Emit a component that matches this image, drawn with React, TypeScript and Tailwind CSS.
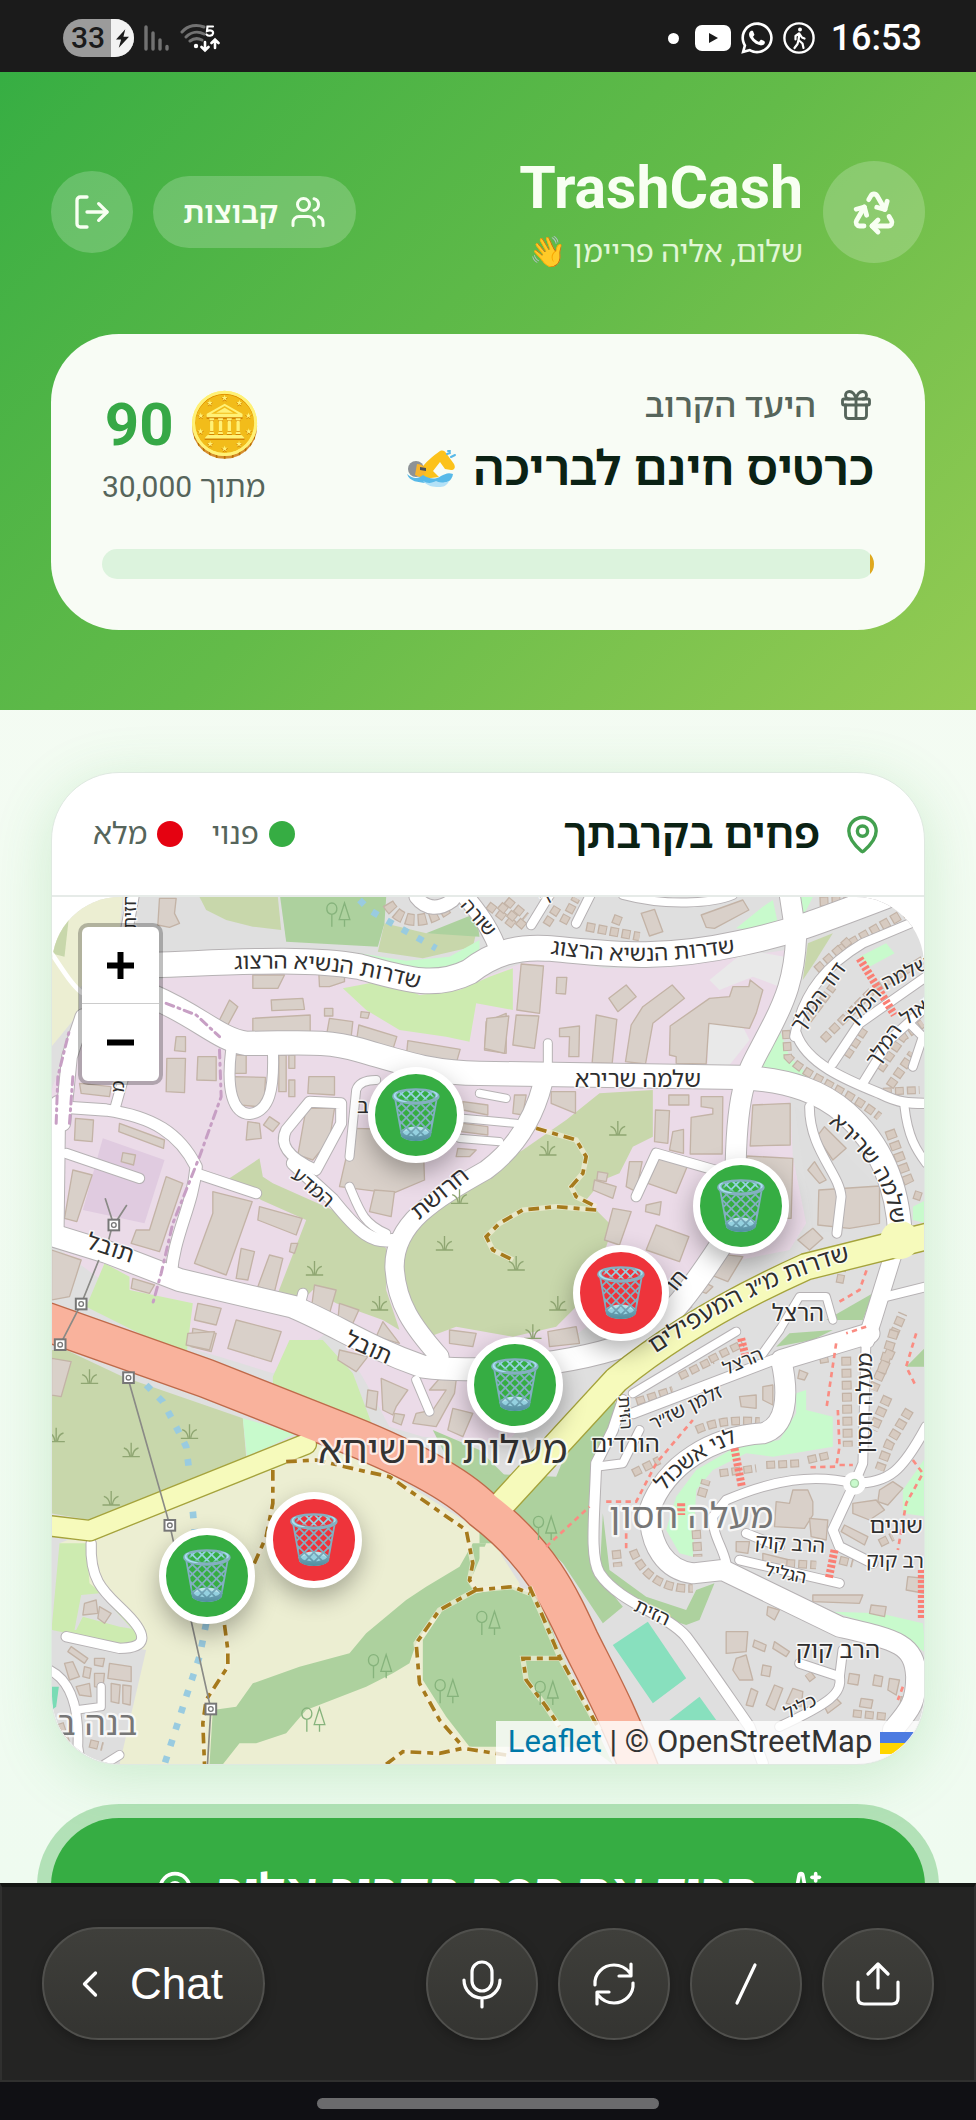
import type { ReactNode } from "react";
import { ChevronLeft, Gift, LogOut, MapPin, Mic, Recycle, Sparkles, Users } from "lucide-react";
import { FaWhatsapp } from "react-icons/fa";

type Road = { d: string; w: number };
type Label = { t: string; d: string; s: number; c?: string };

const OFFSETS = { nw: "translate(0 0)", ne: "translate(1320 0)", sw: "translate(0 1320)", se: "translate(1320 1320)" };
type Quarter = keyof typeof OFFSETS;
const QUARTERS: Quarter[] = ["nw", "ne", "sw", "se"];

const HEATH = "#c8d7ab";
const WOOD = "#add19e";
const GRASS = "#cdebb0";
const PARK = "#c8facc";
const FARM = "#eceed2";

const AREAS: Record<Quarter, [string, string][]> = {
  nw: [
    [FARM, "36,21 250,21 240,120 118,300 118,370 36,470"],
    [HEATH, "36,60 95,21 75,200 36,190"],
    [HEATH, "480,21 715,21 725,120 640,110 560,90 500,60"],
    [WOOD, "722,21 1040,21 1035,100 1015,170 740,155"],
    [HEATH, "1035,100 1160,130 1310,130 1300,170 1150,205 1015,185"],
    [WOOD, "1160,130 1310,70 1320,140"],
    [PARK, "840,180 960,190 1100,212 1230,200 1320,150 1320,210 1180,245 1080,235 960,205"],
    [
      "#ebdbe8",
      "370,265 600,250 930,250 1110,310 1230,300 1500,200 1700,235 1900,230 2240,180 2200,400 2140,520 2250,600 2260,800 2300,1000 2250,1080 2000,1130 1800,1200 1600,1340 1560,1480 1400,1660 1290,1650 1150,1640 1050,1610 980,1480 900,1340 860,1330 700,1450 540,1400 470,1380 36,1060 36,600 110,400",
    ],
    [GRASS, "910,295 1040,270 1140,315 1260,300 1350,260 1420,235 1420,360 1310,340 1290,455 1220,440 1080,420 980,360"],
    ["#e0cbe0", "190,745 375,810 315,1000 130,960"],
    [HEATH, "570,865 660,805 670,860 700,880 880,960 1040,1075 1040,1200 1080,1320 1030,1290 890,1240 820,1200 790,1230 715,1210 800,990 665,930"],
    [HEATH, "1100,1000 1200,900 1320,850 1450,780 1580,690 1680,610 1840,600 1840,740 1780,770 1740,850 1690,870 1640,930 1720,1010 1690,1100 1660,1200 1550,1310 1420,1340 1250,1310 1170,1340 1110,1250 1090,1120"],
    [GRASS, "195,1120 270,1160 270,1200 460,1240 440,1400 320,1340 140,1250"],
  ],
  ne: [
    [PARK, "770,115 850,50 880,30 895,100 830,120"],
    [PARK, "940,21 1000,21 970,80"],
    [PARK, "835,540 900,420 930,500 1020,590 960,570"],
    [PARK, "1140,200 1220,160 1245,190 1170,230"],
    [HEATH, "970,270 985,160 1060,130 1010,210"],
    ["#e9e9e9", "690,270 800,180 915,200 900,290 820,260 720,300"],
    ["#e9e9e9", "685,400 790,410 810,450 750,525 685,525"],
    ["#dedede", "945,650 1010,700 1200,900 1200,1010 1000,1030"],
    [PARK, "1300,950 1340,930 1340,1000 1300,990"],
    [WOOD, "1040,1290 1180,1210 1150,1290"],
    [WOOD, "890,1370 930,1330 1060,1320 1000,1350"],
  ],
  sw: [
    [GRASS, "700,140 750,30 850,30 940,130 1000,290 1040,310 900,260 700,180"],
    [HEATH, "36,60 80,60 250,140 610,265 620,380 370,480 150,570 36,550"],
    [PARK, "610,265 770,310 700,345 622,378"],
    [FARM, "60,640 830,330 1050,430 1350,620 1440,760 1400,1303 230,1303"],
    [GRASS, "60,640 140,640 150,760 320,900 300,970 90,930 36,900"],
    ["#dedede", "36,900 320,960 240,1303 36,1303"],
    ["#dedede", "125,795 180,790 280,900 105,900"],
    [GRASS, "110,900 130,860 240,890 300,900 270,950"],
    [WOOD, "510,1303 520,1140 590,1130 640,1060 780,1010 930,970 980,910 1100,810 1160,770 1260,710 1300,640 1340,640 1290,760 1310,790 1180,860 1130,940 1110,1000 1060,1030 980,1070 800,1140 740,1210 650,1240 600,1240 550,1303"],
    [WOOD, "1150,930 1210,840 1310,790 1420,770 1500,800 1560,960 1720,1303 1650,1250 1290,1250 1220,1160 1150,1050"],
    [WOOD, "1180,300 1320,360 1400,440 1380,520 1240,420"],
    ["#79dcb5", "36,1070 58,1070 50,1130 36,1140"],
  ],
  se: [
    [WOOD, "60,640 0,640 0,430 230,440 330,200 390,200 420,230 340,400 340,720 430,830 370,880 250,700 100,550"],
    [FARM, "0,650 70,650 40,760 0,770"],
    [WOOD, "370,550 390,720 500,800 620,840 650,780 705,760 660,870 620,885 480,840 360,740"],
    [PARK, "770,350 900,330 950,250 950,190 980,180 980,240 1060,260 1060,350 880,380 800,370 700,420 650,480 640,680 600,670 560,600 590,500 650,420"],
    [PARK, "1060,845 1200,850 1330,880 1340,970 1260,910"],
    [PARK, "1270,480 1340,380 1340,560 1270,550"],
    [WOOD, "1280,110 1340,50 1340,110"],
    ["#88e0be", "400,945 505,875 620,1045 520,1120"],
    ["#88e0be", "570,1170 660,1100 710,1170"],
  ],
};

const WHITE_ROADS: Record<Quarter, Road[]> = {
  nw: [
    { d: "M340,225 C560,218 800,200 960,230 C1080,262 1180,300 1290,245 C1360,190 1430,170 1520,175 C1700,190 1850,215 2100,160 C2250,130 2350,90 2560,10", w: 74 },
    { d: "M1380,190 C1360,130 1330,80 1270,10", w: 50 },
    { d: "M340,320 C480,380 540,450 620,460 C780,460 860,450 960,480 C1100,520 1180,550 1320,550 L2100,562 C2260,570 2350,610 2420,670 C2520,760 2575,880 2582,1040", w: 70 },
    { d: "M2250,10 L2270,140 C2265,260 2240,330 2180,440 C2130,540 2090,570 2088,860", w: 60 },
    { d: "M1510,580 C1480,700 1420,780 1340,840 C1180,930 1065,1000 1065,1130 C1070,1240 1120,1310 1200,1400", w: 55 },
    { d: "M20,1030 L200,1085 L420,1170 L760,1250 C900,1310 980,1370 1150,1430 C1300,1450 1600,1430 1800,1350 C1880,1300 1960,1200 2080,1010", w: 66 },
    { d: "M810,635 L905,640 L905,700 L830,840 C740,800 720,760 740,720 Z", w: 30 },
    { d: "M760,820 L880,930 C960,1030 1000,1060 1060,1050", w: 36 },
    { d: "M930,890 C960,960 970,1000 1040,1030", w: 24 },
    { d: "M930,800 L950,600 Q960,570 1010,570", w: 24 },
    { d: "M575,480 C560,600 580,670 630,672 C690,665 705,600 700,480", w: 30 },
    { d: "M50,650 L200,660 C340,680 420,730 470,830 C460,950 400,1040 395,1160", w: 34 },
    { d: "M470,850 L650,910", w: 30 },
    { d: "M80,790 L300,865", w: 28 },
    { d: "M70,700 L90,500 L130,380", w: 44 },
    { d: "M225,660 L270,500", w: 28 },
    { d: "M55,640 L50,1040", w: 44 },
    { d: "M280,21 L260,130", w: 34 },
    { d: "M1130,21 C1160,60 1200,60 1240,30", w: 40 },
    { d: "M1320,610 L1400,625 M1270,685 L1430,700 M1260,745 L1380,755", w: 22 },
    { d: "M790,1210 L780,1250", w: 28 },
  ],
  ne: [
    { d: "M470,920 L530,790 L740,850", w: 28 },
    { d: "M990,650 C990,780 1080,850 1085,920 L1072,1030", w: 26 },
    { d: "M950,430 C980,520 1100,570 1200,610 C1260,640 1290,640 1340,640", w: 28 },
    { d: "M945,440 C970,300 1050,220 1150,160 L1340,80", w: 26 },
    { d: "M1060,520 L1140,400 L1340,260 M1150,580 L1230,450 L1340,350", w: 26 },
    { d: "M1275,650 C1285,740 1310,780 1340,820", w: 24 },
    { d: "M1290,400 L1330,440 L1300,530", w: 24 },
    { d: "M155,105 L210,15 M290,100 L335,10", w: 26 },
    { d: "M430,15 C560,50 700,40 760,15", w: 24 },
    { d: "M1245,1080 L1180,1290 L1160,1350", w: 50 },
    { d: "M205,545 L205,460", w: 24 },
    { d: "M900,1320 L960,1220 L1040,1220 L1060,1290", w: 22 },
    { d: "M1220,1220 L1340,1190", w: 26 },
  ],
  sw: [
    { d: "M155,640 C150,760 200,790 260,850 C330,920 320,955 240,955 L80,920", w: 28 },
    { d: "M30,1020 C90,1050 120,1120 115,1250 L125,1310", w: 26 },
    { d: "M185,1070 L185,1130 L110,1140", w: 22 },
    { d: "M195,1303 L240,1275", w: 24 },
    { d: "M1130,150 L1170,245", w: 24 },
  ],
  se: [
    { d: "M1170,10 L905,90 C930,200 920,290 850,310 C700,320 560,400 510,540 C510,650 560,720 640,730 L730,720 L1080,890 C1250,930 1305,940 1310,1040 C1310,1120 1290,1140 1240,1200", w: 60 },
    { d: "M1160,20 L1150,400 L1125,460 C1000,430 880,450 740,510 L700,560 C700,620 730,650 740,700", w: 26 },
    { d: "M1125,460 C1230,460 1270,420 1340,290 M1125,460 L1060,600 L1080,650 L1180,700", w: 28 },
    { d: "M780,690 L1080,760 M800,610 L900,650", w: 26 },
    { d: "M460,250 L880,90", w: 30 },
    { d: "M460,190 L770,5 M850,70 L900,0", w: 24 },
    { d: "M430,210 L400,300 L350,400 C345,560 330,680 360,730 C420,820 560,850 620,920 C680,1000 740,1090 810,1190 L850,1300", w: 30 },
    { d: "M350,410 L430,400 L480,300", w: 24 },
    { d: "M960,1000 L1080,1040 C1090,1090 1050,1120 900,1190", w: 26 },
    { d: "M1080,1040 L1090,960", w: 26 },
  ],
};

const BUILDINGS: Record<Quarter, string[]> = {
  nw: [
    "360,25 410,25 405,70 420,100 390,112 355,105",
    "640,255 735,255 715,295 640,295",
    "838,250 915,250 915,275 870,290 840,290",
    "695,330 790,325 795,358 697,362",
    "640,385 812,375 812,425 640,430",
    "540,390 570,330 595,350 565,405",
    "870,385 940,395 935,440 862,430",
    "958,405 1072,440 1060,478 952,445",
    "1105,452 1262,478 1250,520 1100,505",
    "855,355 880,355 880,378 855,378",
    "965,365 990,368 985,385 963,382",
    "410,440 438,440 438,485 405,482",
    "382,505 438,505 435,608 380,605",
    "475,500 530,500 530,572 472,570",
    "585,495 620,495 620,550 585,550",
    "583,560 678,562 675,615 655,650 600,645 583,615",
    "718,495 740,495 740,605 718,605",
    "748,495 766,495 766,535 748,535",
    "748,570 766,570 766,620 748,620",
    "808,560 885,560 885,615 805,610",
    "800,655 885,655 870,750 820,810 775,795",
    "690,680 720,700 700,725 672,705",
    "625,695 660,700 665,745 620,750",
    "108,685 162,690 158,755 105,750",
    "240,700 375,750 372,775 238,725",
    "250,788 288,795 282,825 245,815",
    "100,840 158,855 112,995 75,985",
    "380,860 430,880 360,1085 275,1060 290,1020 330,1020",
    "520,905 638,935 560,1155 465,1120 520,970",
    "660,950 788,985 770,1035 655,990",
    "605,1075 645,1085 625,1170 590,1165",
    "690,1095 730,1105 705,1205 655,1190",
    "755,1060 775,1060 765,1090 750,1085",
    "120,580 215,590 210,620 125,610",
    "36,1080 125,1110 90,1220 36,1230",
    "280,1165 345,1185 330,1210 275,1195",
    "940,715 1150,720 1155,870 1060,910 900,890",
    "1005,900 1065,905 1055,980 990,965",
    "825,1185 890,1200 870,1270 815,1260",
    "900,1240 958,1260 940,1300 895,1290",
    "475,1240 545,1255 530,1305 465,1290",
    "460,1315 530,1330 515,1385 455,1370",
    "590,1290 725,1325 695,1415 565,1375",
    "1270,635 1345,645 1345,675 1270,660",
    "1270,700 1345,710 1345,735 1265,725",
    "1255,775 1310,780 1290,800 1250,800",
    "1010,1340 1030,1295 1080,1360",
    "1340,395 1400,370 1400,490 1335,480",
  ],
  ne: [
    "125,222 192,228 180,370 112,360",
    "232,262 262,262 258,312 230,310",
    "110,375 178,378 165,475 100,465",
    "22,385 88,378 75,490 15,475",
    "388,325 440,285 470,320 415,365",
    "578,285 615,325 520,400 498,522 438,515 455,405 490,350",
    "350,375 412,388 398,520 338,518",
    "240,415 300,408 298,500 268,500 270,440 240,440",
    "572,408 690,325 750,320 760,290 808,290 812,270 850,300 830,370 810,415 688,400 680,522 590,520 590,500 570,495",
    "665,75 790,30 808,60 705,115 680,112",
    "485,70 525,58 550,125 510,138",
    "215,605 288,605 288,670 215,640",
    "568,615 628,615 628,645 568,645",
    "665,620 730,620 728,792 632,792 635,682 700,672 700,655 665,650",
    "528,660 570,662 565,760 525,755",
    "580,725 612,718 612,790 570,780",
    "450,815 488,815 470,905 440,890",
    "540,800 625,825 590,910 505,880",
    "500,945 545,935 540,975 498,965",
    "530,1005 628,1040 600,1115 500,1080",
    "400,955 455,965 420,1065 375,1050",
    "345,870 410,890 400,925 340,900",
    "355,845 385,850 380,875 352,870",
    "105,615 140,615 130,675 100,670",
    "820,645 932,640 932,765 812,768",
    "800,798 940,805 935,985 900,985",
    "1035,710 1100,775 1060,810 1012,740",
    "1005,815 1040,870 1020,880 985,840",
    "1018,900 1200,888 1200,1000 1110,1015 1015,1005",
    "1000,1015 1030,1045 990,1080 955,1050",
    "700,1090 790,1100 745,1175 670,1145",
    "640,1160 700,1190 680,1210 630,1190",
    "205,1325 290,1310 300,1360 210,1370",
  ],
  sw: [
    "445,10 525,5 510,60 440,45",
    "36,85 95,95 65,200 36,195",
    "985,180 1015,185 1010,240 980,230",
    "1025,145 1105,180 1070,230 1060,255 1030,240",
    "1065,250 1095,255 1085,285 1060,275",
    "1205,140 1250,150 1245,190 1190,290 1120,280 1130,250 1180,240 1220,180 1170,180",
    "1240,235 1300,250 1270,320 1225,300",
    "900,60 985,80 950,125 895,90",
    "1230,0 1310,10 1300,50 1230,40",
    "135,820 170,810 175,850 130,855",
    "180,830 215,850 195,880 175,865",
    "210,1000 275,1010 275,1055 205,1045",
    "165,985 195,985 190,1010 165,1005",
    "135,1010 155,1015 150,1045 130,1040",
    "165,1030 195,1030 190,1075 165,1070",
    "215,1060 242,1065 238,1120 215,1115",
    "250,1065 275,1068 272,1125 250,1120",
    "75,1000 100,995 120,1040 90,1050",
    "110,1070 150,1060 155,1100 120,1095",
    "95,950 145,985 135,1000 85,965",
  ],
  se: [
    "780,200 830,195 830,235 785,230",
    "850,170 880,165 880,225 850,210",
    "890,515 930,520 940,480 985,480 1000,515 1000,555 975,595 885,590",
    "990,565 1045,570 1040,630 995,620",
    "770,635 810,635 805,670 770,665",
    "1120,520 1190,510 1215,540 1170,570 1120,550",
    "1200,480 1240,455 1270,475 1225,525 1195,515",
    "1095,585 1165,620 1155,645 1085,605",
    "740,905 805,905 800,965 740,970",
    "770,985 800,975 820,1050 780,1050 760,1020",
    "825,930 860,945 855,965 820,950",
    "885,935 930,965 920,980 880,955",
    "850,1005 875,1010 870,1040 845,1035",
    "815,1075 835,1085 820,1130 800,1125",
    "885,1065 910,1075 885,1140 860,1125",
    "940,1075 970,1085 965,1130 920,1120",
    "1110,1030 1140,1035 1135,1065 1105,1060",
    "1185,1035 1210,1040 1205,1070 1180,1065",
    "1230,1045 1260,1050 1250,1095 1225,1080",
    "1035,1130 1070,1105 1085,1120 1045,1150",
    "1145,1105 1180,1110 1175,1135 1140,1130",
    "1175,825 1220,830 1215,860 1170,850",
    "1000,795 1085,795 1150,795 1140,820 1000,815",
    "865,830 900,840 885,870 862,855",
    "1285,740 1335,745 1335,790 1280,780",
    "1265,1100 1290,1105 1285,1150 1260,1140",
    "960,120 985,130 975,150 955,145",
    "850,670 930,690 930,710 850,695",
  ],
};

/* Terraced houses: thick dashed strokes running along the streets. */
const TERRACES: Record<Quarter, Road[]> = {
  nw: [
    { d: "M1045,40 C1080,100 1150,110 1230,50", w: 36 },
    { d: "M1345,45 L1430,110 M1400,30 L1460,80", w: 26 },
  ],
  ne: [
    { d: "M60,45 L135,110 M250,100 L290,25 M200,105 L235,50", w: 26 },
    { d: "M320,110 L480,140 M400,85 L425,95", w: 28 },
    { d: "M1020,35 L1130,30 M1080,180 L1290,60", w: 30 },
    { d: "M1010,240 L1110,150 M985,390 L1060,290", w: 26 },
    { d: "M1030,450 L1180,300 L1330,210 M1100,500 L1160,410", w: 26 },
    { d: "M920,420 L925,500 C980,560 1100,600 1200,680", w: 26 },
    { d: "M1230,590 L1300,490 M1200,540 L1270,440 L1330,400", w: 28 },
    { d: "M1230,720 C1260,800 1280,860 1290,880", w: 32 },
    { d: "M1210,605 L1320,600", w: 24 },
    { d: "M630,1240 L560,1300 M1240,1340 L1270,1270", w: 28 },
    { d: "M1080,1180 L1090,1130 M1310,930 L1320,900", w: 24 },
  ],
  sw: [{ d: "M60,1180 L80,1240 M150,1240 L190,1250", w: 26 }],
  se: [
    { d: "M690,90 L790,40 M470,215 L580,180 M600,140 L700,90", w: 24 },
    { d: "M1245,0 L1205,130 M1235,60 L1180,180 M1225,200 L1180,300 M1290,240 L1230,340 L1200,420", w: 30 },
    { d: "M1100,80 L1105,350", w: 30 },
    { d: "M650,300 C720,270 780,270 840,275", w: 26 },
    { d: "M460,430 L540,390 M460,660 C490,740 560,780 640,775", w: 26 },
    { d: "M410,660 L415,710 M665,500 L680,450 M650,600 L655,680", w: 28 },
    { d: "M720,430 L830,415 M860,405 L960,400 M985,390 L1050,375", w: 24 },
    { d: "M920,700 L1010,705 M1080,690 L1120,700 M1200,640 L1240,620", w: 26 },
    { d: "M1120,1150 L1220,1160 M1000,1050 L985,1030 M1020,90 L1050,85", w: 24 },
  ],
};

const TRACKS: Record<Quarter, string> = {
  nw: "",
  ne: "M170,715 L290,750 L320,800 L310,850 L275,890 L290,920 L350,950 M350,960 L230,950 L130,960 L60,1000 L20,1040 L40,1080 L100,1110",
  sw: "M740,395 L830,390 L980,425 L1050,440 L1200,545 L1280,600 L1300,700 L1290,750 L1310,780 L1420,770 L1470,790 M1310,780 L1200,840 L1130,940 L1140,1060 L1200,1170 L1270,1250 M1040,1303 L1090,1265 L1200,1270 L1270,1255 L1400,1275 M700,420 L700,520 L680,620 L640,710 M555,885 L565,960 L565,1010 L500,1110 L490,1180 L495,1303",
  se: "M150,770 L190,860 L240,980 L360,1200 M240,985 L130,985 L140,1050 L200,1130 L240,1190",
};

const STREAMS: Record<Quarter, string> = {
  nw: "M960,30 L990,60 L1040,90 L1190,175",
  ne: "",
  sw: "M320,165 L370,215 L420,310 L440,350 L450,430 M460,545 L465,600 M500,880 L480,980 L440,1100 L375,1303",
  se: "",
};

const STEPS: Record<Quarter, string> = {
  nw: "",
  ne: "M1140,205 L1245,375",
  sw: "",
  se: "M765,355 L787,470 M785,25 L797,75 M1065,660 L1048,745 M1327,720 L1327,870 M605,520 L605,555",
};

const FOOTWAYS: Record<Quarter, string> = {
  nw: "",
  ne: "M1080,1235 L1140,1200 L1165,1130 M1160,1310 L1100,1330",
  sw: "",
  se: "M200,650 L330,530 M380,515 L470,515 L530,400 L640,270 M440,655 L440,600 M1070,40 L1040,240 M1075,240 L1080,350 L1070,410 L980,412 M1080,405 L1120,405 M1310,10 L1280,110 L1310,170 M1300,390 L1330,430 L1280,520 L1255,660 M1270,1070 L1255,1110",
};

const SCRUBS = "825,1135 1215,1060 1260,920 1525,775 1735,715 1430,1120 1555,1240 1480,1325 150,1460 275,1680 450,1625 215,1825 50,1635 1020,1240".split(" ");
const TREES = "895,75 1020,2330 820,2490 1345,2200 1220,2405 1515,1915 1520,2410".split(" ");

const LABELS: Label[] = [
  { t: "שדרות הנשיא הרצוג", d: "M550,238 C750,235 900,225 1170,307", s: 67 },
  { t: "שדרות הנשיא הרצוג", d: "M1500,186 C1680,218 1850,228 2120,182", s: 67 },
  { t: "שלמה שרירא", d: "M1570,592 L2020,592", s: 69 },
  { t: "חרושת", d: "M1115,1010 L1315,845", s: 69 },
  { t: "המדע", d: "M735,845 L880,970", s: 60 },
  { t: "תובל", d: "M120,1068 L290,1124", s: 70 },
  { t: "תובל", d: "M895,1358 L1060,1430", s: 70 },
  { t: "שלמה שרירא", d: "M2350,685 C2480,800 2550,880 2555,1025", s: 67 },
  { t: "דוד המלך", d: "M2275,440 L2430,225", s: 60 },
  { t: "שלמה המלך", d: "M2425,430 L2540,300 L2690,225", s: 60 },
  { t: "שאול המלך", d: "M2500,545 L2595,410 L2720,325", s: 60 },
  { t: "שדרות מ״ג המעפילים", d: "M1815,1412 C2000,1290 2200,1165 2470,1102", s: 73 },
  { t: "הרצל", d: "M2180,1292 L2370,1292", s: 70 },
  { t: "הרצל", d: "M2040,1464 L2195,1398", s: 56 },
  { t: "זלמן שז״ר", d: "M1825,1630 L2070,1510", s: 58 },
  { t: "הזית", d: "M1735,1500 L1745,1640", s: 52 },
  { t: "הורדים", d: "M1640,1685 L1875,1685", s: 70 },
  { t: "לני אשכול", d: "M1862,1818 C1940,1730 2000,1690 2110,1650", s: 66 },
  { t: "מעלה חסון", d: "M2498,1705 L2498,1375", s: 66 },
  { t: "מעלה חסון", d: "M1680,1915 L2230,1915", s: 107, c: "#777" },
  { t: "שונים", d: "M2475,1930 L2665,1930", s: 68 },
  { t: "הרב קוק", d: "M2125,1972 L2375,1990", s: 60 },
  { t: "הרב קוק", d: "M2460,2030 L2710,2035", s: 60 },
  { t: "הגליל", d: "M2145,2050 L2325,2086", s: 54 },
  { t: "הזית", d: "M1765,2155 L1895,2215", s: 58 },
  { t: "הרב קוק", d: "M2235,2305 L2555,2305", s: 72 },
  { t: "כליל", d: "M2225,2498 L2355,2433", s: 54 },
  { t: "חו", d: "M1895,1225 L1960,1145", s: 64 },
  { t: "מעלות תרשיחא", d: "M760,1720 L1660,1720", s: 114, c: "#333" },
  { t: "בנה ב", d: "M10,2535 L335,2535", s: 100, c: "#777" },
  { t: "שורה", d: "M1250,35 L1355,155", s: 58 },
  { t: "חזית", d: "M290,130 L290,0", s: 54 },
  { t: "מ", d: "M255,620 L255,560", s: 54 },
  { t: "יר", d: "M1500,55 L1565,20", s: 54 },
  { t: "ב", d: "M945,670 L995,670", s: 62 },
];

const POLES = "223,1005 125,1242 62,1364 267,1463 391,1906 514,2457".split(" ");

function Quarters({ render }: { render: (q: Quarter) => ReactNode }) {
  return (
    <>
      {QUARTERS.map((q) => (
        <g key={q} transform={OFFSETS[q]}>
          {render(q)}
        </g>
      ))}
    </>
  );
}

function StreetMap() {
  const red = "M20,1295 L500,1465 L880,1615 C1100,1700 1250,1780 1330,1860 C1500,1990 1560,2120 1620,2250 C1680,2370 1740,2480 1800,2640";
  const yellowWest = "M10,1905 L150,1922 L800,1662";
  const yellowEast = "M1385,1845 L1730,1470 C1900,1330 2100,1220 2300,1130 L2680,1035";
  return (
    <svg
      className="block h-full w-full [direction:ltr]"
      viewBox="36 21 2619 2601"
      preserveAspectRatio="xMidYMid slice"
      fontFamily="'Noto Sans Hebrew','Open Sans','Noto Sans','Liberation Sans',sans-serif"
      aria-label="מפת הפחים"
      role="img"
    >
      <rect x="0" y="0" width="2700" height="2700" fill="#dfdfdf" />
      <Quarters render={(q) => AREAS[q].map(([fill, points], i) => <polygon key={i} points={points} fill={fill} />)} />
      <path d="M36,190 C70,240 100,290 130,310" fill="none" stroke="#fff" strokeWidth="14" />

      <g fill="#d9d0c9" stroke="#c3b3a6" strokeWidth="4" strokeLinejoin="round">
        <Quarters render={(q) => BUILDINGS[q].map((points, i) => <polygon key={i} points={points} />)} />
      </g>
      <g fill="none">
        <Quarters
          render={(q) =>
            TERRACES[q].map((r, i) => (
              <g key={i}>
                <path d={r.d} stroke="#c3b3a6" strokeWidth={r.w} strokeDasharray="27 9" />
                <path d={r.d} stroke="#d7cbc1" strokeWidth={r.w - 7} strokeDasharray="20 16" strokeDashoffset="-4" />
              </g>
            ))
          }
        />
      </g>

      <g fill="none" strokeLinecap="round" strokeLinejoin="round">
        <Quarters render={(q) => WHITE_ROADS[q].map((r, i) => <path key={i} d={r.d} stroke="#b6b2b4" strokeWidth={r.w + 6} />)} />
        <Quarters render={(q) => WHITE_ROADS[q].map((r, i) => <path key={i} d={r.d} stroke="#fff" strokeWidth={r.w} />)} />
        <path d={yellowWest} stroke="#a5a33c" strokeWidth="66" />
        <path d={yellowEast} stroke="#a5a33c" strokeWidth="84" />
        <path d={red} stroke="#bf6a4a" strokeWidth="120" />
        <path d={yellowWest} stroke="#f6fabb" strokeWidth="58" />
        <path d={yellowEast} stroke="#f6fabb" strokeWidth="76" />
        <circle cx="2580" cy="1050" r="58" fill="#f6fabb" />
        <path d={red} stroke="#f9b29c" strokeWidth="112" />
        <path d="M540,480 L545,620 L480,800 L400,1000 L365,1150 L340,1240" stroke="#c79fc4" strokeWidth="9" strokeDasharray="24 16 6 16" />
        <path d="M380,340 L470,375 L540,440 M50,700 L55,560 L90,420 M90,700 L100,560" stroke="#c79fc4" strokeWidth="9" strokeDasharray="24 14 6 14" />
      </g>
      <circle cx="2445" cy="1780" r="34" fill="#fff" />
      <circle cx="2445" cy="1780" r="12" fill={PARK} stroke="#a9cfa9" strokeWidth="4" />

      <g fill="none" strokeWidth="16" stroke="#f5efd8" strokeOpacity="0.7">
        <Quarters render={(q) => <path d={TRACKS[q]} />} />
      </g>
      <g fill="none" stroke="#a67a1c" strokeWidth="11" strokeDasharray="32 18 18 18">
        <Quarters render={(q) => <path d={TRACKS[q]} />} />
      </g>
      <g fill="none" stroke="#99cbe0" strokeWidth="20" strokeDasharray="20 32">
        <Quarters render={(q) => <path d={STREAMS[q]} />} />
      </g>
      <g fill="none" stroke="#fa7f74" strokeWidth="24" strokeDasharray="9 6">
        <Quarters render={(q) => <path d={STEPS[q]} />} />
      </g>
      <g fill="none" stroke="#fa8c82" strokeWidth="8" strokeDasharray="16 13">
        <Quarters render={(q) => <path d={FOOTWAYS[q]} />} />
      </g>

      <path d="M265,1463 L391,1906 L514,2457 L504,2622 M178,1110 L125,1242 L62,1364 M197,925 L223,1005 L262,945 M215,1020 L205,1060" fill="none" stroke="#8a8a86" strokeWidth="5" />
      {POLES.map((p) => {
        const [x, y] = p.split(",").map(Number);
        return (
          <g key={p}>
            <rect x={x - 16} y={y - 16} width="32" height="32" fill="#fff" stroke="#777" strokeWidth="6" />
            <circle cx={x} cy={y} r="7" fill="none" stroke="#777" strokeWidth="4" />
          </g>
        );
      })}
      <g fill="none" stroke="#8fa672" strokeWidth="4">
        {SCRUBS.map((p, i) => (
          <path key={i} transform={`translate(${p})`} d="M-26,20 H26 M0,18 V-22 M-4,18 C-6,4 -14,-4 -22,-6 M4,18 C6,4 14,-4 22,-6" />
        ))}
      </g>
      <g fill="none" stroke="#86b37c" strokeWidth="4">
        {TREES.map((p, i) => (
          <path key={i} transform={`translate(${p})`} d="M-18,35 V-2 M-18,-2 C-40,-6 -36,-36 -18,-36 C0,-36 4,-6 -18,-2 M20,35 V14 M4,14 L20,-36 L36,14 Z" />
        ))}
      </g>

      {LABELS.map((l, i) => (
        <g key={i}>
          <path id={`street-${i}`} d={l.d} fill="none" />
          <text
            fontSize={l.s}
            fill={l.c ?? "#2e2e2e"}
            stroke="#fff"
            strokeOpacity="0.75"
            strokeWidth={l.s > 80 ? 14 : 9}
            strokeLinejoin="round"
            paintOrder="stroke"
            textAnchor="middle"
          >
            <textPath href={`#street-${i}`} startOffset="50%">
              {l.t}
            </textPath>
          </text>
        </g>
      ))}
    </svg>
  );
}

const BINS = [
  { x: 41.7, y: 25.1, full: false },
  { x: 79, y: 35.6, full: false },
  { x: 65.3, y: 45.7, full: true },
  { x: 53.1, y: 56.3, full: false },
  { x: 30.1, y: 74.2, full: true },
  { x: 17.8, y: 78.3, full: false },
];

function BinMarker({ x, y, full }: { x: number; y: number; full: boolean }) {
  return (
    <button
      type="button"
      aria-label={full ? "פח מלא" : "פח פנוי"}
      style={{ left: `${x}%`, top: `${y}%` }}
      className={
        "absolute flex size-24 -translate-x-1/2 -translate-y-1/2 items-center justify-center rounded-full border-[7px] border-white text-[48px] leading-none shadow-[0_10px_24px_rgba(0,0,0,0.3)] " +
        (full ? "bg-[#ee343b]" : "bg-[#36ad43]")
      }
    >
      <span aria-hidden="true">🗑️</span>
    </button>
  );
}

function Swimmer() {
  return (
    <svg viewBox="0 0 50 38" className="h-[38px] w-[50px]" aria-hidden="true">
      <path d="M12 22C18 12 26 6 33 1c3-1 5 0 6 2l8 11c2 4 0 6-3 6l-6-1-5-7-7 9 6 6-16 2z" fill="#fcc21b" />
      <circle cx="9" cy="19" r="8" fill="#8d9296" />
      <path d="M10 14c5 0 9 3 9 8l-4 6-7-3z" fill="#f7b52e" />
      <path d="M13 17l6 1v3l-6-1z" fill="#4b5358" />
      <path d="M0 24c6 5 11 5 16 1 6 4 12 5 18 1 4-2 7-4 12-2-1 7-6 9-12 9-6-1-9 1-15 0C11 32 3 32 0 24z" fill="#58b9e8" />
      <path d="M16 31c5 3 9 2 13 0 4 2 8 2 13 0-2 5-6 6-10 6-6 0-12-1-16-6z" fill="#b3e1f7" />
      <path d="M40 4l3-1M44 7l4-2M41 1l2 0" stroke="#58b9e8" strokeWidth="2" strokeLinecap="round" />
    </svg>
  );
}

function StatusBar() {
  return (
    <div dir="ltr" className="flex h-[72px] shrink-0 items-center justify-between bg-[#1b1b1b] pt-1 pr-[54px] pl-[63px] font-['Roboto',sans-serif] text-white">
      <div className="flex items-center gap-[10px]">
        <div className="flex h-[38px] w-[71px] overflow-hidden rounded-full bg-[#9b9b9b]">
          <span className="flex-1 pl-2 text-[30px] leading-[38px] font-medium text-[#1b1b1b]">33</span>
          <span className="flex w-[23px] items-center justify-center bg-[#f2f2f2]">
            <svg viewBox="0 0 14 20" className="h-[19px] w-[13px] fill-[#1b1b1b]">
              <path d="M10 0 0 11h5.500L3 20 14 8H8z" />
            </svg>
          </span>
        </div>
        <svg viewBox="0 0 26 28" className="h-7 w-[26px]" stroke="#727272" strokeWidth="3.400" strokeLinecap="round">
          <path d="M2 3V25M9 9V25M16 16V25M23 22.500V25" />
        </svg>
        <svg viewBox="0 0 40 30" className="h-[30px] w-10" fill="none" strokeLinecap="round">
          <path d="M2 9C8 2 17 1 24 4M6 14c5-5 12-6 18-3M10 18c4-3 8-3 12-1" stroke="#727272" strokeWidth="3" />
          <circle cx="16" cy="23" r="2.200" fill="#fff" />
          <path d="M25 19v8m-3.500-3 3.500 3.500L28.500 24M35 25v-8m-3.500 3 3.500-3.500L38.500 20" stroke="#fff" strokeWidth="2.600" />
          <path d="M33 3.500h-5.500L27 8c4-1.500 6.500 0 6 2.500-.5 2.500-4.500 3-6.500 1" stroke="#fff" strokeWidth="2.200" />
        </svg>
      </div>
      <div className="flex items-center gap-2">
        <span className="mr-2 size-[11px] rounded-full bg-white" />
        <svg viewBox="0 0 36 26" className="h-[26px] w-9">
          <rect width="36" height="26" rx="7" fill="#fff" />
          <path d="M14 8v10l9-5z" fill="#1b1b1b" />
        </svg>
        <FaWhatsapp className="size-9" />
        <svg viewBox="0 0 32 32" className="size-8" fill="none" stroke="#fff" strokeLinecap="round" strokeLinejoin="round">
          <circle cx="16" cy="16" r="14.600" strokeWidth="2.400" />
          <circle cx="17" cy="7.500" r="2" fill="#fff" strokeWidth="0" />
          <path d="M16.500 11.500 15.500 18l4 3.500 1 4.500M15.500 18 14.500 22l-3 4M16 11.500l-3.500 2.500v3.500M17 12.500l2 3 2.500 1" strokeWidth="2.200" />
        </svg>
        <span className="ml-2 text-[36px] leading-[40px] font-medium">16:53</span>
      </div>
    </div>
  );
}

function ToolButton({ label, children }: { label: string; children: ReactNode }) {
  return (
    <button
      type="button"
      aria-label={label}
      className="flex size-[112px] items-center justify-center rounded-full border-2 border-[#50504d] bg-linear-to-b from-[#3f3f3b] to-[#343431] text-white shadow-[0_4px_12px_rgba(0,0,0,0.25)]"
    >
      {children}
    </button>
  );
}

export default function App() {
  return (
    <div dir="rtl" lang="he" className="flex h-dvh min-w-0 flex-col bg-[#f4fcf3] font-['Roboto','Noto_Sans_Hebrew','Open_Sans','Liberation_Sans',sans-serif]">
      <StatusBar />

      <main className="min-h-0 flex-1 overflow-y-auto bg-linear-to-b from-[#f6fcf4] to-[#effbf0] [scrollbar-width:none]">
        <header className="bg-linear-135 from-[#36ae43] via-[#63bb49] to-[#94cb53] px-[51px] pt-[82px] pb-20">
          <div className="flex items-center justify-between">
            <div className="flex items-center gap-5">
              <div className="flex size-[102px] items-center justify-center rounded-full bg-white/20 text-[#f8fff2]">
                <Recycle size={48} strokeWidth={2.4} />
              </div>
              <div>
                <h1 className="text-[59px] leading-[68px] font-bold text-[#f8fff2]">TrashCash</h1>
                <p className="mt-3 text-[30px] leading-[36px] text-[#e2f7d6]">שלום, אליה פריימן 👋</p>
              </div>
            </div>
            <div className="flex items-center gap-5">
              <button type="button" className="flex h-[72px] items-center gap-3 rounded-full bg-white/20 px-[30px] text-[30px] font-semibold text-[#f8fff2]">
                <Users size={36} />
                <span>קבוצות</span>
              </button>
              <button type="button" aria-label="יציאה" className="flex size-[82px] items-center justify-center rounded-full bg-white/20 text-[#f8fff2]">
                <LogOut size={40} />
              </button>
            </div>
          </div>

          <section className="mt-16 rounded-[68px] bg-[#f8fcf5] p-[51px]">
            <div className="flex items-start justify-between">
              <div>
                <div className="flex items-center gap-[22px] text-[#56655b]">
                  <Gift size={36} strokeWidth={1.9} />
                  <span className="text-[34px] leading-[40px] font-medium">היעד הקרוב</span>
                </div>
                <h2 className="mt-4 flex items-center gap-4 text-[48px] leading-[56px] font-semibold text-[#0b2214]">
                  כרטיס חינם לבריכה
                  <Swimmer />
                </h2>
              </div>
              <div className="flex flex-col items-center">
                <div className="flex items-center gap-3">
                  <span className="text-[62px] leading-[80px]">🪙</span>
                  <span className="text-[60px] leading-[80px] font-bold text-[#36a846]">90</span>
                </div>
                <span className="text-[30px] leading-[44px] text-[#56655b]">מתוך 30,000</span>
              </div>
            </div>
            <div role="progressbar" aria-label="התקדמות ליעד" aria-valuenow={90} aria-valuemin={0} aria-valuemax={30000} className="mt-10 h-[30px] overflow-hidden rounded-full bg-[#dcf3dd]">
              <div className="h-full min-w-1 bg-[#e0a81e]" style={{ width: `${(90 / 30000) * 100}%` }} />
            </div>
          </section>
        </header>

        <div className="flex flex-col gap-[53px] px-[51px] pt-[62px] pb-[51px]">
          <section className="overflow-hidden rounded-[68px] border border-[#dfe9e1] bg-white shadow-[0_12px_60px_rgba(54,173,67,0.2)]">
            <div className="flex h-[124px] items-center justify-between border-b-2 border-[#e6ebe8] px-[41px]">
              <h2 className="flex items-center gap-[22px] text-[42px] leading-[56px] font-semibold text-[#0b2214]">
                <MapPin size={41} className="text-[#43a04f]" />
                פחים בקרבתך
              </h2>
              <ul className="flex items-center gap-7 text-[30px] leading-[40px] text-[#56655b]">
                <li className="flex items-center gap-[10px]">
                  <span className="size-[26px] rounded-full bg-[#36ad43]" />
                  פנוי
                </li>
                <li className="flex items-center gap-[10px]">
                  <span className="size-[26px] rounded-full bg-[#e50211]" />
                  מלא
                </li>
              </ul>
            </div>

            <div className="relative h-[867px] overflow-hidden rounded-[68px]">
              <StreetMap />
              {BINS.map((bin) => (
                <BinMarker key={`${bin.x}-${bin.y}`} {...bin} />
              ))}
              <div className="absolute top-[26px] left-[26px] flex flex-col overflow-hidden rounded-[10px] border-4 border-black/25 bg-white bg-clip-padding">
                <button type="button" aria-label="הגדלה" className="flex size-[77px] items-center justify-center border-b border-[#ccc]">
                  <svg viewBox="0 0 27 27" className="size-[27px]">
                    <path d="M13.500 0V27M0 13.500H27" stroke="#000" strokeWidth="6" />
                  </svg>
                </button>
                <button type="button" aria-label="הקטנה" className="flex size-[77px] items-center justify-center">
                  <svg viewBox="0 0 27 27" className="size-[27px]">
                    <path d="M0 13.500H27" stroke="#000" strokeWidth="6" />
                  </svg>
                </button>
              </div>
              <div dir="ltr" className="absolute right-0 bottom-0 flex h-[43px] items-center bg-white/80 pr-[10px] pl-3 text-[31px] text-[#333]">
                <a href="#leaflet" className="text-[#0078a8]">
                  Leaflet
                </a>
                <span className="whitespace-pre"> | © OpenStreetMap </span>
                <svg viewBox="0 0 34 22" className="h-[22px] w-[34px]">
                  <path fill="#4c7be1" d="M0 0h34v11H0z" />
                  <path fill="#ffd500" d="M0 11h34v11H0z" />
                </svg>
              </div>
            </div>
          </section>

          <button
            type="button"
            className="flex h-[148px] items-center justify-center gap-5 rounded-[68px] bg-[#36ad43] text-[48px] font-semibold text-white shadow-[0_0_0_14px_rgba(54,173,67,0.33)]"
          >
            <Sparkles size={44} />
            <span>סרוק את הפח הקרוב אליך</span>
            <MapPin size={44} />
          </button>
        </div>
      </main>

      <footer dir="ltr" className="relative shrink-0">
        <nav className="flex h-[199px] items-center justify-between border-2 border-t-4 border-[#30302f] border-t-[#151714] bg-[#242423] px-10">
          <button
            type="button"
            className="flex h-[113px] items-center gap-[18px] rounded-full border-2 border-[#50504d] bg-linear-to-b from-[#3f3f3b] to-[#343431] pr-10 pl-6 font-['Liberation_Sans',sans-serif] text-[44px] text-white shadow-[0_4px_12px_rgba(0,0,0,0.25)]"
          >
            <ChevronLeft size={44} strokeWidth={1.8} />
            <span>Chat</span>
          </button>
          <div className="flex items-center gap-5">
            <ToolButton label="Voice">
              <svg viewBox="0 0 44 50" className="h-[50px] w-11" fill="none" stroke="currentColor" strokeWidth="3.200" strokeLinecap="round" strokeLinejoin="round">
                <rect x="12" y="3" width="20" height="29" rx="10" />
                <path d="M4 21c0 10 8 18 18 18s18-8 18-18M22 39v9" />
              </svg>
            </ToolButton>
            <ToolButton label="Refresh">
              <svg viewBox="0 0 44 44" className="size-11" fill="none" stroke="currentColor" strokeWidth="3.200" strokeLinecap="round" strokeLinejoin="round">
                <path d="M3 23C2 12 11 3 22 3c6.500 0 12 3 16 8M39 2v12H27M41 21c1 11-8 20-19 20-6.500 0-12-3-16-8M5 42V30h12" />
              </svg>
            </ToolButton>
            <ToolButton label="Commands">
              <svg viewBox="0 0 44 44" className="size-11" fill="none" stroke="currentColor" strokeWidth="3.200" strokeLinecap="round">
                <path d="M31 3 13 41" />
              </svg>
            </ToolButton>
            <ToolButton label="Share">
              <svg viewBox="0 0 44 44" className="size-11" fill="none" stroke="currentColor" strokeWidth="3.200" strokeLinecap="round" strokeLinejoin="round">
                <path d="M22 26V2M12 12 22 2l10 10M2 20v16c0 4 2 6 6 6h28c4 0 6-2 6-6V20" />
              </svg>
            </ToolButton>
          </div>
        </nav>
        <div className="flex h-[38px] items-center justify-center bg-[#101014] pt-1">
          <div className="h-[11px] w-[35%] rounded-full bg-[#6b6b6d]" />
        </div>
      </footer>
    </div>
  );
}
